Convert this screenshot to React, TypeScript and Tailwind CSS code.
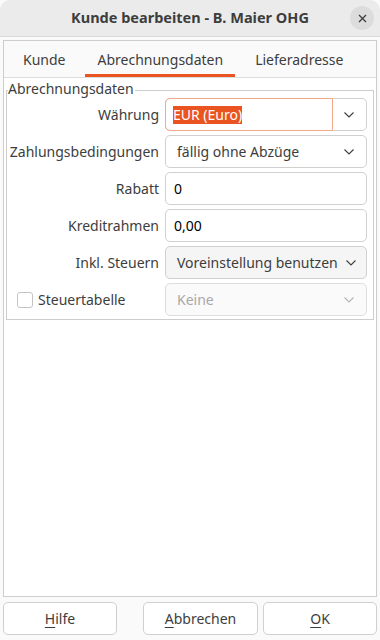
import { useState } from "react"

const font = { fontFamily: '"Noto Sans", "Open Sans", sans-serif' }

function Chevron({ muted }: { muted?: boolean }) {
  return (
    <svg width="12" height="8" viewBox="0 0 12 8" fill="none">
      <path d="M1.5 1.5 L6 6 L10.5 1.5" stroke={muted ? "#b4b4b4" : "#3d3d3d"} strokeWidth="1.1" />
    </svg>
  )
}

function Row({ label, children }: { label: React.ReactNode; children: React.ReactNode }) {
  return (
    <div className="flex items-center h-[33px]">
      <div className="w-[158px] shrink-0 text-right pr-[6px]">{label}</div>
      <div className="flex-1 h-full">{children}</div>
    </div>
  )
}

export default function App() {
  const [tab] = useState(1)
  const tabs = ["Kunde", "Abrechnungsdaten", "Lieferadresse"]

  return (
    <div className="w-[380px] h-[640px] flex flex-col bg-[#fafafa] text-[14px] text-[#3d3d3d]" style={font}>
      <div className="h-[37px] shrink-0 flex items-center justify-center relative bg-[#ebebeb] border-b border-[#dadada] rounded-t-[10px]">
        <span className="font-bold text-[14.5px] text-[#3d3d3d]">Kunde bearbeiten - B. Maier OHG</span>
        <button className="absolute right-[6px] top-[6px] w-[24px] h-[24px] rounded-full bg-[#dcdcdc] flex items-center justify-center">
          <svg width="9" height="9" viewBox="0 0 9 9">
            <path d="M1 1 L8 8 M8 1 L1 8" stroke="#3d3d3d" strokeWidth="1.3" />
          </svg>
        </button>
      </div>

      <div className="mx-[3px] mt-[3px] flex-1 flex flex-col border border-[#cdcdcd] bg-white">
        <div className="h-[37px] shrink-0 flex items-stretch gap-[8px] border-b border-[#dcdcdc] bg-[#fafafa] pl-[7px]">
          {tabs.map((t, i) => (
            <div
              key={t}
              className={
                i === tab
                  ? "flex items-center px-[12px] border-b-[3px] border-[#e95420] pt-[3px]"
                  : "flex items-center px-[12px] border-b-[3px] border-transparent pt-[3px]"
              }
            >
              {t}
            </div>
          ))}
        </div>

        <div className="px-[2px] pt-[4px]">
          <div className="relative border border-[#cdcdcd] mt-[8px] pt-[7px] pb-[3px]">
            <span className="absolute left-[1px] top-[-11px] bg-white pr-[1px] leading-[18px]">Abrechnungsdaten</span>
            <div className="flex flex-col gap-[4px] pr-[6px]">
              <Row label="Währung">
                <div className="h-full flex rounded-[5px] border border-[#d0d0d0] bg-white">
                  <div className="flex-1 flex items-center border border-[#f3a78b] rounded-l-[5px] -m-px pl-[7px]">
                    <span className="bg-[#e95420] text-white leading-[18px]">EUR (Euro)</span>
                  </div>
                  <div className="w-[34px] flex items-center justify-center">
                    <Chevron />
                  </div>
                </div>
              </Row>
              <Row label="Zahlungsbedingungen">
                <div className="h-full flex items-center justify-between rounded-[5px] border border-[#d0d0d0] bg-white pl-[11px] pr-[11px]">
                  <span>fällig ohne Abzüge</span>
                  <Chevron />
                </div>
              </Row>
              <Row label="Rabatt">
                <div className="h-full flex items-center rounded-[5px] border border-[#d0d0d0] bg-white pl-[8px] text-black">0</div>
              </Row>
              <Row label="Kreditrahmen">
                <div className="h-full flex items-center rounded-[5px] border border-[#d0d0d0] bg-white pl-[8px] text-black">0,00</div>
              </Row>
              <Row label="Inkl. Steuern">
                <div className="h-full flex items-center justify-between rounded-[5px] border border-[#d0d0d0] bg-[#f5f5f5] pl-[11px] pr-[9px]">
                  <span>Voreinstellung benutzen</span>
                  <Chevron />
                </div>
              </Row>
              <div className="flex items-center h-[33px]">
                <div className="w-[158px] shrink-0 flex items-center pl-[10px] gap-[5px]">
                  <span className="w-[16px] h-[16px] rounded-[3px] border border-[#c4c4c4] bg-white" />
                  <span>Steuertabelle</span>
                </div>
                <div className="flex-1 h-full flex items-center justify-between rounded-[5px] border border-[#dedede] bg-[#fafafa] pl-[11px] pr-[11px] text-[#a8a8a8]">
                  <span>Keine</span>
                  <Chevron muted />
                </div>
              </div>
            </div>
          </div>
        </div>
      </div>

      <div className="h-[43px] shrink-0 flex items-center px-[3px] gap-[5px]">
        <button className="w-[114px] h-[33px] rounded-[5px] border border-[#d0d0d0] bg-white">
          <span className="underline underline-offset-[3px] decoration-1">H</span>ilfe
        </button>
        <div className="flex-1" />
        <button className="w-[115px] h-[33px] rounded-[5px] border border-[#d0d0d0] bg-white">
          <span className="underline underline-offset-[3px] decoration-1">A</span>bbrechen
        </button>
        <button className="w-[114px] h-[33px] rounded-[5px] border border-[#d0d0d0] bg-white">
          <span className="underline underline-offset-[3px] decoration-1">O</span>K
        </button>
      </div>
    </div>
  )
}
